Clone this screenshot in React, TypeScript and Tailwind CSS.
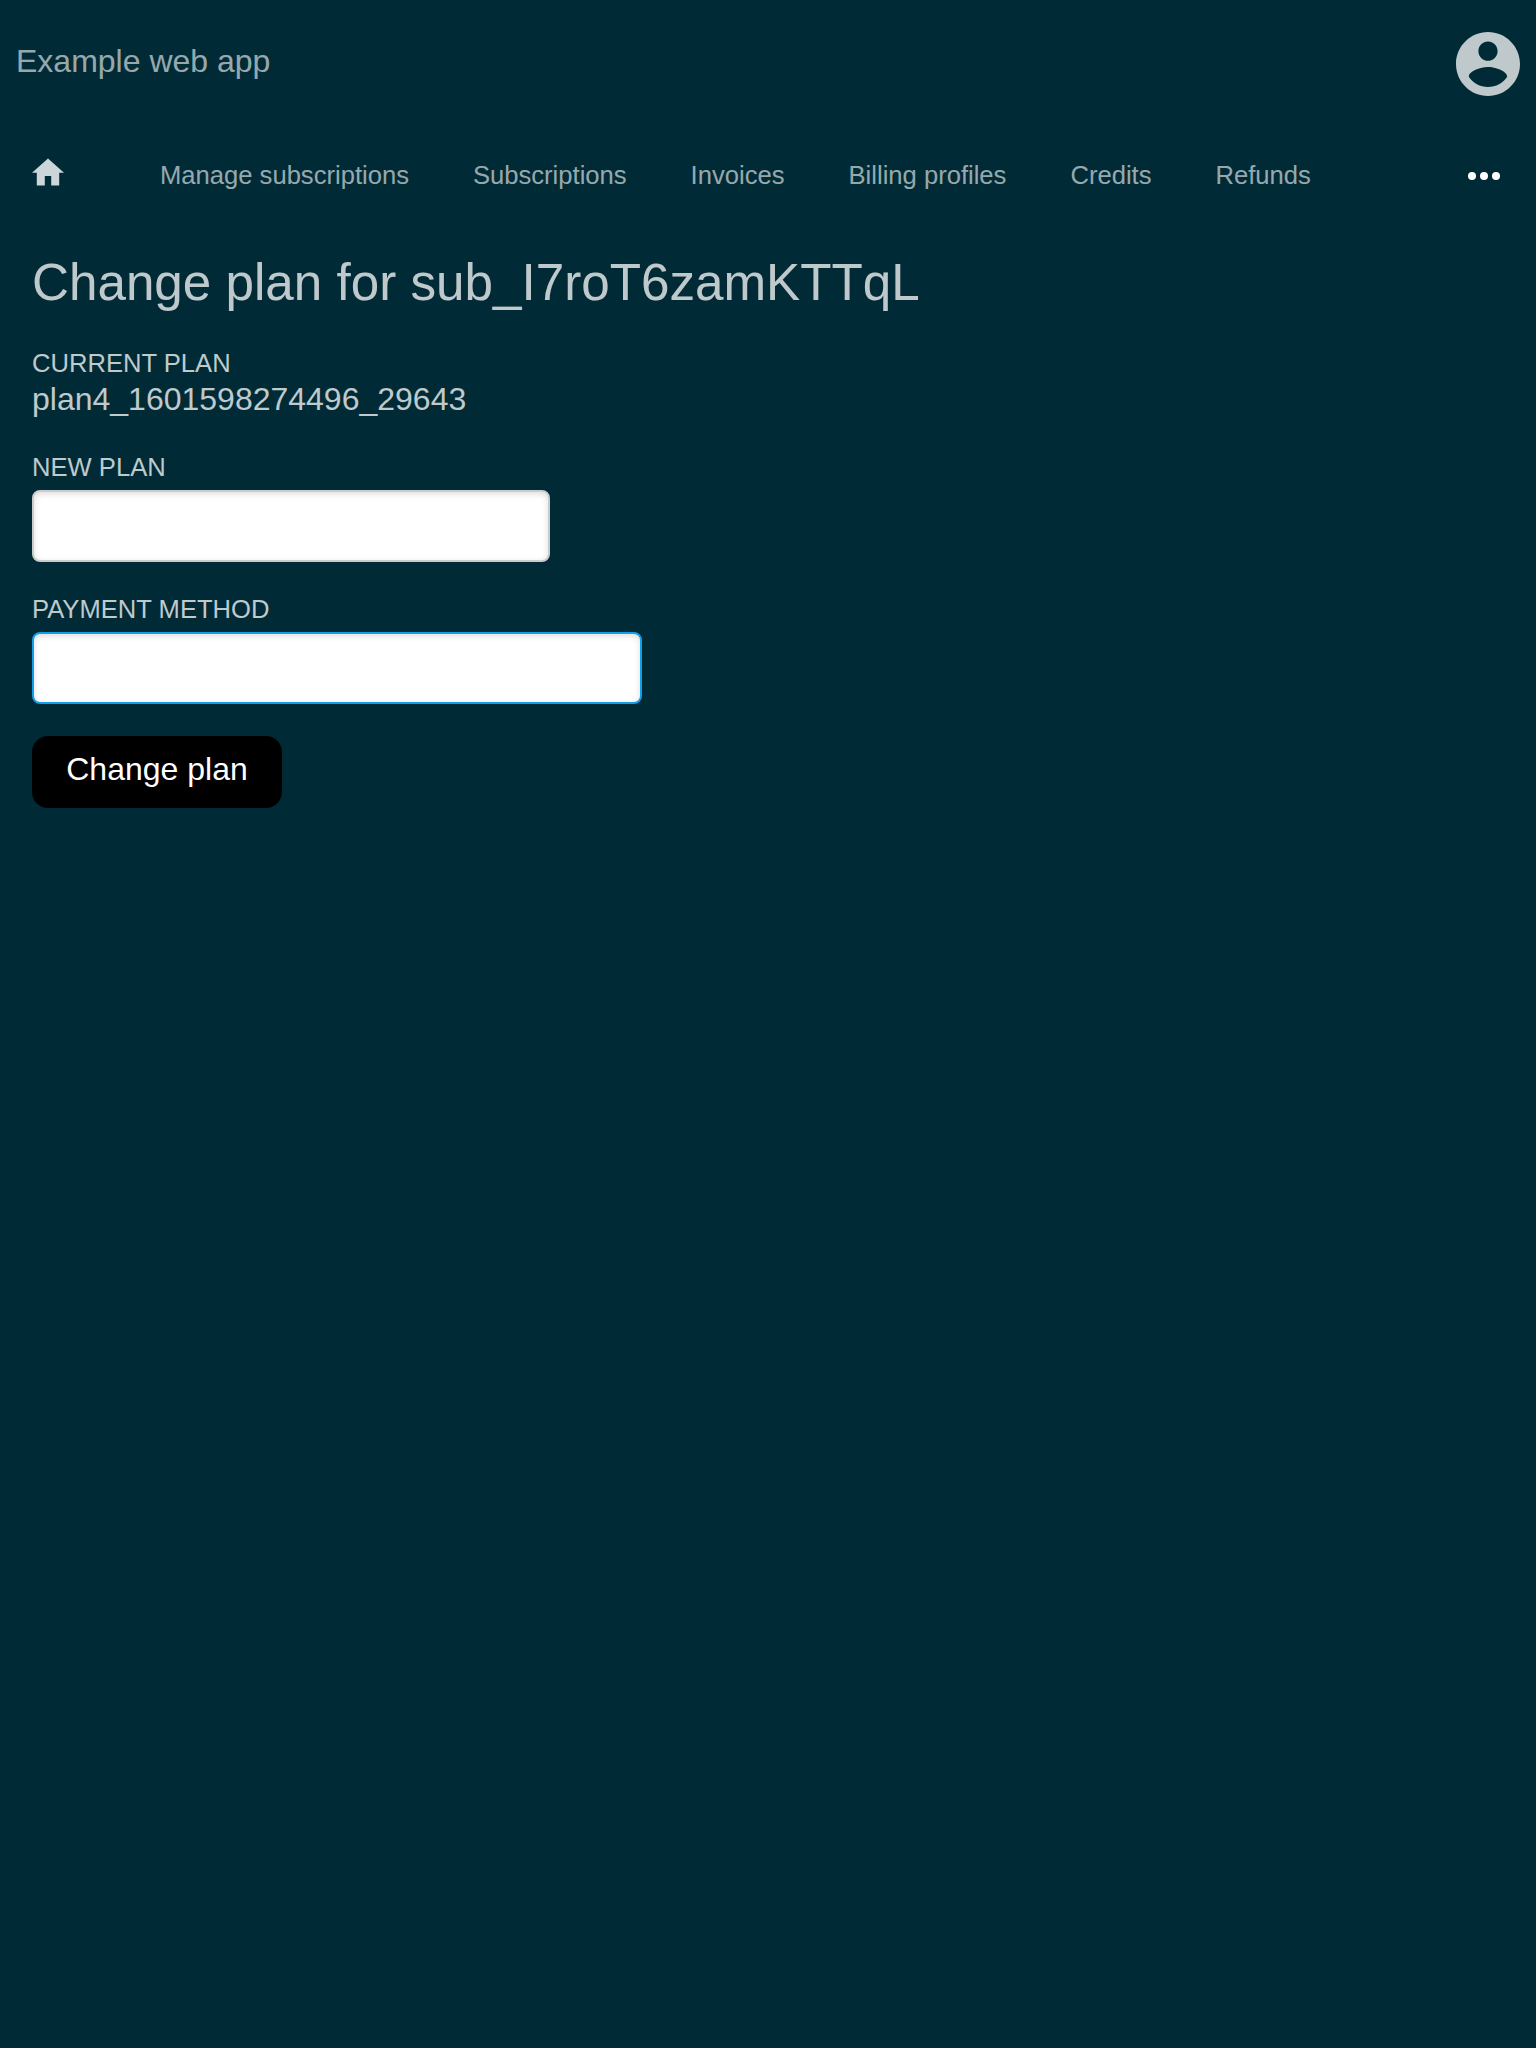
import React from "react";

const links = ["Manage subscriptions", "Subscriptions", "Invoices", "Billing profiles", "Credits", "Refunds"];

export default function App() {
  return (
    <div className="min-h-[2048px] w-full bg-[#002b36] font-['Liberation_Sans',Arial,sans-serif] text-[32px] text-white/75">
      <header className="flex h-32 items-start justify-between px-4">
        <a className="mt-[37px] leading-[48px] text-white/60">Example web app</a>
        <svg viewBox="2 2 20 20" className="mt-8 size-16 fill-current">
          <path d="M12 2C6.48 2 2 6.48 2 12s4.48 10 10 10 10-4.48 10-10S17.52 2 12 2zm0 3c1.66 0 3 1.34 3 3s-1.34 3-3 3-3-1.34-3-3 1.34-3 3-3zm0 14.2c-2.5 0-4.71-1.28-6-3.22.03-1.99 4-3.08 6-3.08 1.99 0 5.97 1.09 6 3.08-1.29 1.94-3.5 3.22-6 3.22z" />
        </svg>
      </header>

      <nav className="flex h-24 items-center pl-8 pr-7">
        <svg viewBox="2 2.75 20 17.5" className="mb-2 h-7 w-8 shrink-0 fill-white/80">
          <path d="M10 20v-6h4v6h5v-8h3L12 3 2 12h3v8z" />
        </svg>
        <ul className="mb-0.5 ml-24 flex gap-16 text-[25.6px] leading-[38px] text-white/60">
          {links.map((link) => (
            <li key={link} className="whitespace-nowrap">{link}</li>
          ))}
        </ul>
        <svg viewBox="0 0 24 24" className="ml-auto size-12 fill-white">
          <circle cx="6" cy="12" r="2" />
          <circle cx="12" cy="12" r="2" />
          <circle cx="18" cy="12" r="2" />
        </svg>
      </nav>

      <main className="px-8 pt-[27px]">
        <h1 className="text-[51.2px] leading-[64px]">Change plan for sub_I7roT6zamKTTqL</h1>
        <div className="mt-[29px] text-[25.6px] leading-[38px] uppercase">Current plan</div>
        <div className="mt-px leading-[32px]">plan4_1601598274496_29643</div>
        <label className="mt-[33px] block text-[25.6px] leading-[38px] uppercase">New plan</label>
        <div className="mt-1 h-[72px] w-[518px] rounded-lg border-2 border-[#cccccc] bg-white shadow-[inset_0_2px_6px_#dddddd]" />
        <label className="mt-7 block text-[25.6px] leading-[38px] uppercase">Payment method</label>
        <div className="mt-1 h-[72px] w-[610px] rounded-lg border-2 border-[#129fea] bg-white shadow-[inset_0_2px_6px_#dddddd]" />
        <button className="mt-8 block h-[72px] w-[250px] rounded-2xl bg-black pb-1.5 text-center leading-[66px] text-white">
          Change plan
        </button>
      </main>
    </div>
  );
}
